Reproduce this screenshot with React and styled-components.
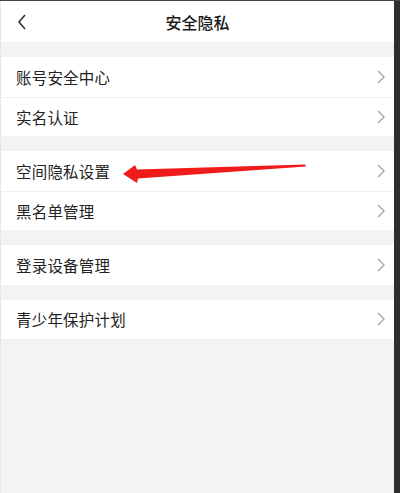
import styled, { createGlobalStyle } from "styled-components";

const GlobalStyle = createGlobalStyle`
  html, body {
    margin: 0;
    padding: 0;
    background: #2e2e2e;
  }
  * { box-sizing: border-box; }
`;

const Frame = styled.div`
  width: 400px;
  height: 493px;
  display: flex;
  background: #2e2e2e;
  border-top: 1px solid #444;
  overflow: hidden;
`;

const Screen = styled.div`
  width: 394px;
  height: 100%;
  background: #f3f3f3;
  position: relative;
  font-family: "Noto Sans CJK SC", "Noto Sans", sans-serif;
  border-left: 1px solid #e6e6e6;
`;

const Header = styled.div`
  height: 41px;
  background: #fff;
  display: grid;
  grid-template-columns: 44px 1fr 44px;
  align-items: center;
`;

const Back = styled.div`
  display: flex;
  align-items: center;
  justify-content: center;
  padding-right: 2px;
`;

const Title = styled.div`
  text-align: center;
  font-size: 16px;
  font-weight: 500;
  color: #1a1a1a;
`;

const Group = styled.div`
  margin-top: ${(p) => p.gap}px;
  background: #fff;
`;

const Row = styled.div`
  height: 39.5px;
  display: flex;
  align-items: center;
  justify-content: space-between;
  padding: 0 8px 0 15px;
  border-top: ${(p) => (p.first ? "none" : "1px solid #efefef")};
`;

const Label = styled.span`
  font-size: 15.5px;
  color: #222;
  letter-spacing: 0.2px;
`;

const Arrow = styled.svg`
  position: absolute;
  left: 0;
  top: 0;
  pointer-events: none;
`;

const Chevron = () => (
  <svg width="10" height="16" viewBox="0 0 10 16">
    <path d="M2 2 L8 8 L2 14" fill="none" stroke="#a5a5a5" strokeWidth="1.4" />
  </svg>
);

const groups = [
  { gap: 15, items: ["账号安全中心", "实名认证"] },
  { gap: 15, items: ["空间隐私设置", "黑名单管理"] },
  { gap: 15, items: ["登录设备管理"] },
  { gap: 15, items: ["青少年保护计划"] },
];

export default function App() {
  return (
    <>
      <GlobalStyle />
      <Frame>
        <Screen>
          <Header>
            <Back>
              <svg width="12" height="18" viewBox="0 0 12 18">
                <path d="M9 2 L3 9 L9 16" fill="none" stroke="#333" strokeWidth="1.6" />
              </svg>
            </Back>
            <Title>安全隐私</Title>
            <span />
          </Header>
          {groups.map((g, gi) => (
            <Group key={gi} gap={g.gap}>
              {g.items.map((it, i) => (
                <Row key={it} first={i === 0}>
                  <Label>{it}</Label>
                  <Chevron />
                </Row>
              ))}
            </Group>
          ))}
          <Arrow width="394" height="493" viewBox="0 0 394 493">
            <path
              d="M122 173 L134 164 L136 168.5 L304 163.5 L305 165.5 L137 177.5 L136 182 Z"
              fill="#f01c1c"
            />
          </Arrow>
        </Screen>
      </Frame>
    </>
  );
}
